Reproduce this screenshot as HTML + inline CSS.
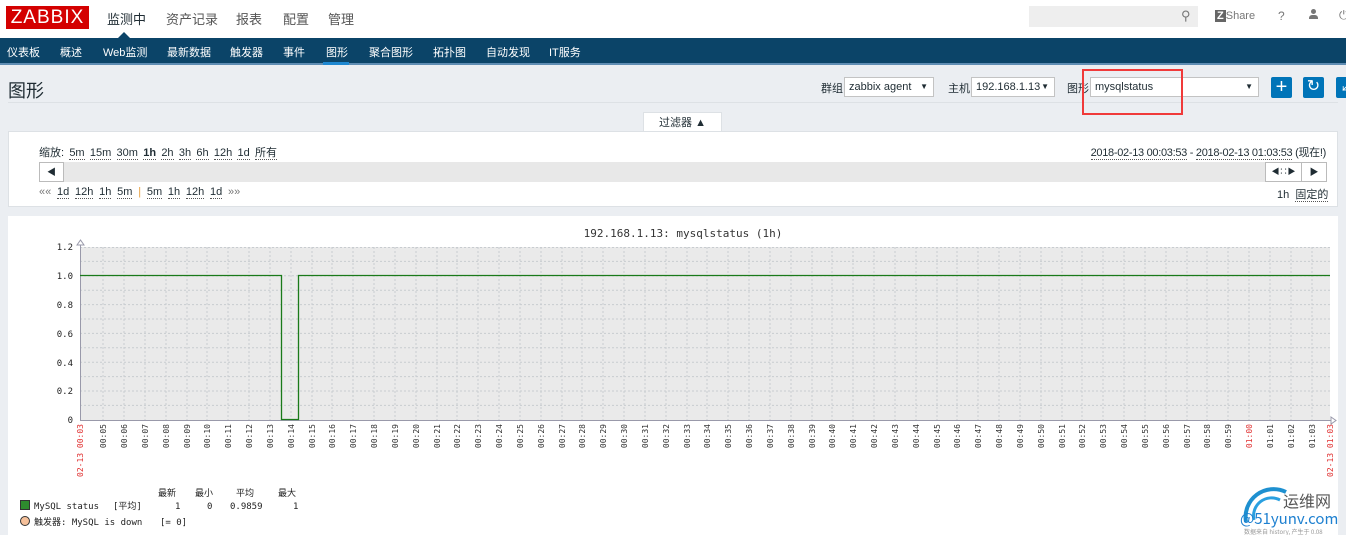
<!DOCTYPE html>
<html><head><meta charset="utf-8"><style>
*{box-sizing:border-box;margin:0;padding:0}
body{width:1346px;height:535px;overflow:hidden;background:#ebeef2;font-family:"Liberation Sans","Noto Sans CJK SC",sans-serif;font-size:12px;color:#1f2c33;position:relative}
.abs{position:absolute}
.top{left:0;top:0;width:1346px;height:38px;background:#fff}
.logo{left:6px;top:6px;width:83px;height:23px;background:#d40000;color:#fff;font-size:19px;line-height:23px;text-align:center;letter-spacing:1px}
.mm{top:9px;font-size:13px;color:#555}
.nav{left:0;top:38px;width:1346px;height:27px;background:#0b4468;border-bottom:2px solid #5f8db3}
.nv{top:44px;color:#fff;font-size:11px}
.sel{height:20px;background:#fff;border:1px solid #c3c3c3;font-size:11px;line-height:18px;padding-left:4px}
.sel:after{content:"▼";position:absolute;right:5px;font-size:8px}
.lbl{font-size:11px;top:80px}
.btn{top:77px;width:21px;height:21px;background:#0074b8;border-radius:2px;color:#fff;text-align:center;font-size:20px;line-height:20px}
.u{border-bottom:1px dotted #555}
</style></head><body>
<div class="abs top"></div>
<div class="abs logo">ZABBIX</div>
<div class="abs mm" style="left:107px;color:#1f2c33">监测中</div>
<div class="abs" style="left:118px;top:32px;width:0;height:0;border-left:6px solid transparent;border-right:6px solid transparent;border-bottom:6px solid #0b4468"></div>
<div class="abs mm" style="left:166px">资产记录</div>
<div class="abs mm" style="left:236px">报表</div>
<div class="abs mm" style="left:283px">配置</div>
<div class="abs mm" style="left:328px">管理</div>
<div class="abs" style="left:1029px;top:6px;width:169px;height:21px;background:#eee"></div>
<div class="abs" style="left:1181px;top:8px;font-size:13px;color:#777">⚲</div>
<div class="abs" style="left:1215px;top:10px;font-size:11px;color:#777"><span style="background:#666;color:#fff;font-weight:bold;padding:0 2px">Z</span>Share</div>
<div class="abs" style="left:1278px;top:9px;font-size:12px;color:#777">?</div>
<div class="abs" style="left:1309px;top:9px;width:9px;height:10px;"><div style="width:5px;height:5px;border-radius:50%;background:#777;margin-left:2px"></div><div style="width:9px;height:4px;background:#777;margin-top:1px;border-radius:3px 3px 0 0"></div></div>
<div class="abs" style="left:1339px;top:8px;font-size:12px;color:#777">⏻</div>
<div class="abs nav"></div>
<div class="abs nv" style="left:7px">仪表板</div>
<div class="abs nv" style="left:60px">概述</div>
<div class="abs nv" style="left:103px">Web监测</div>
<div class="abs nv" style="left:167px">最新数据</div>
<div class="abs nv" style="left:230px">触发器</div>
<div class="abs nv" style="left:283px">事件</div>
<div class="abs nv" style="left:326px">图形</div>
<div class="abs" style="left:323px;top:62px;width:26px;height:3px;background:#1e87d0"></div>
<div class="abs nv" style="left:369px">聚合图形</div>
<div class="abs nv" style="left:433px">拓扑图</div>
<div class="abs nv" style="left:486px">自动发现</div>
<div class="abs nv" style="left:549px">IT服务</div>
<div class="abs" style="left:8px;top:77px;font-size:18px">图形</div>
<div class="abs" style="left:8px;top:102px;width:1330px;height:1px;background:#dde1e5"></div>
<div class="abs lbl" style="left:821px">群组</div>
<div class="abs sel" style="left:844px;top:77px;width:90px">zabbix agent</div>
<div class="abs lbl" style="left:948px">主机</div>
<div class="abs sel" style="left:971px;top:77px;width:84px">192.168.1.13</div>
<div class="abs lbl" style="left:1067px">图形</div>
<div class="abs sel" style="left:1090px;top:77px;width:169px">mysqlstatus</div>
<div class="abs" style="left:1082px;top:69px;width:101px;height:46px;border:2px solid #f03a3a"></div>
<div class="abs btn" style="left:1271px">+</div>
<div class="abs btn" style="left:1303px;font-size:16px">↻</div>
<div class="abs btn" style="left:1336px;font-size:12px">↙</div>
<div class="abs" style="left:643px;top:112px;width:79px;height:20px;background:#fff;border:1px solid #dde1e5;border-bottom:none;text-align:center;font-size:11px;line-height:20px">过滤器 ▲</div>
<div class="abs" style="left:8px;top:131px;width:1330px;height:76px;background:#fff;border:1px solid #dde1e5"></div>
<div class="abs" style="left:39px;top:144px;font-size:11px;word-spacing:2.2px">缩放: <span class="u">5m</span> <span class="u">15m</span> <span class="u">30m</span> <b class="u">1h</b> <span class="u">2h</span> <span class="u">3h</span> <span class="u">6h</span> <span class="u">12h</span> <span class="u">1d</span> <span class="u">所有</span></div>
<div class="abs" style="right:20px;top:144px;font-size:11px;letter-spacing:-0.3px;white-space:nowrap"><span class="u">2018-02-13 00:03:53</span> - <span class="u">2018-02-13 01:03:53</span> (现在!)</div>
<div class="abs" style="left:39px;top:162px;width:1288px;height:20px;background:#e8e8e8"></div>
<div class="abs" style="left:39px;top:162px;width:25px;height:20px;background:#fff;border:1px solid #bbb;font-size:9px;text-align:center;line-height:18px">◀</div>
<div class="abs" style="left:1265px;top:162px;width:37px;height:20px;background:#fff;border:1px solid #bbb;font-size:8px;text-align:center;line-height:18px">◀∷▶</div>
<div class="abs" style="left:1301px;top:162px;width:26px;height:20px;background:#fff;border:1px solid #bbb;font-size:9px;text-align:center;line-height:18px">▶</div>
<div class="abs" style="left:39px;top:186px;font-size:11px;word-spacing:2.7px"><span style="color:#777">««</span> <span class="u">1d</span> <span class="u">12h</span> <span class="u">1h</span> <span class="u">5m</span> <span style="color:#e8a040">|</span> <span class="u">5m</span> <span class="u">1h</span> <span class="u">12h</span> <span class="u">1d</span> <span style="color:#777">»»</span></div>
<div class="abs" style="left:1277px;top:186px;font-size:11px">1h &nbsp;<span class="u">固定的</span></div>
<div class="abs" style="left:8px;top:216px;width:1330px;height:319px;background:#fff"></div>
<svg class="abs" style="left:0;top:0" width="1346" height="535">
<text x="683" y="237" font-family="DejaVu Sans Mono,monospace" font-size="11" text-anchor="middle" fill="#333">192.168.1.13: mysqlstatus (1h)</text>
<rect x="80" y="247" width="1250" height="173" fill="#eaeaea"/>
<g stroke="#c8ccd0" stroke-dasharray="2,2" stroke-width="1">
<path d="M80 261.4H1330M80 275.8H1330M80 290.2H1330M80 304.6H1330M80 319H1330M80 333.4H1330M80 347.8H1330M80 362.2H1330M80 376.6H1330M80 391H1330M80 405.4H1330M80 247.5H1330"/>
<path d="M103 247V420M124 247V420M145 247V420M166 247V420M187 247V420M207 247V420M228 247V420M249 247V420M270 247V420M291 247V420M312 247V420M332 247V420M353 247V420M374 247V420M395 247V420M416 247V420M437 247V420M457 247V420M478 247V420M499 247V420M520 247V420M541 247V420M562 247V420M582 247V420M603 247V420M624 247V420M645 247V420M666 247V420M687 247V420M707 247V420M728 247V420M749 247V420M770 247V420M791 247V420M812 247V420M832 247V420M853 247V420M874 247V420M895 247V420M916 247V420M937 247V420M957 247V420M978 247V420M999 247V420M1020 247V420M1041 247V420M1062 247V420M1082 247V420M1103 247V420M1124 247V420M1145 247V420M1166 247V420M1187 247V420M1207 247V420M1228 247V420M1249 247V420M1270 247V420M1291 247V420M1312 247V420"/>
</g>
<path d="M80.5 243V420.5H1334" stroke="#99a" fill="none"/>
<path d="M77 245l3.5-5 3.5 5z M1331 417l5 3.5-5 3.5z" fill="#fff" stroke="#99a"/>
<path d="M80 275.5H281.5V419.5H298.5V275.5H1330" stroke="#1a7a1a" fill="none" stroke-width="1.3"/>
<g font-family="DejaVu Sans Mono,monospace" font-size="9" fill="#222" text-anchor="end">
<text x="73" y="250">1.2</text><text x="73" y="279">1.0</text><text x="73" y="308">0.8</text><text x="73" y="337">0.6</text><text x="73" y="366">0.4</text><text x="73" y="394">0.2</text><text x="73" y="423">0</text>
</g>
<g font-family="DejaVu Sans Mono,monospace" font-size="8" fill="#333" text-anchor="end">
<text transform="translate(83,424) rotate(-90)" fill="#e03030">02-13 00:03</text>
<text transform="translate(106,424) rotate(-90)">00:05</text><text transform="translate(127,424) rotate(-90)">00:06</text><text transform="translate(148,424) rotate(-90)">00:07</text><text transform="translate(169,424) rotate(-90)">00:08</text><text transform="translate(190,424) rotate(-90)">00:09</text><text transform="translate(210,424) rotate(-90)">00:10</text><text transform="translate(231,424) rotate(-90)">00:11</text><text transform="translate(252,424) rotate(-90)">00:12</text><text transform="translate(273,424) rotate(-90)">00:13</text><text transform="translate(294,424) rotate(-90)">00:14</text><text transform="translate(315,424) rotate(-90)">00:15</text><text transform="translate(335,424) rotate(-90)">00:16</text><text transform="translate(356,424) rotate(-90)">00:17</text><text transform="translate(377,424) rotate(-90)">00:18</text><text transform="translate(398,424) rotate(-90)">00:19</text><text transform="translate(419,424) rotate(-90)">00:20</text><text transform="translate(440,424) rotate(-90)">00:21</text><text transform="translate(460,424) rotate(-90)">00:22</text><text transform="translate(481,424) rotate(-90)">00:23</text><text transform="translate(502,424) rotate(-90)">00:24</text><text transform="translate(523,424) rotate(-90)">00:25</text><text transform="translate(544,424) rotate(-90)">00:26</text><text transform="translate(565,424) rotate(-90)">00:27</text><text transform="translate(585,424) rotate(-90)">00:28</text><text transform="translate(606,424) rotate(-90)">00:29</text><text transform="translate(627,424) rotate(-90)">00:30</text><text transform="translate(648,424) rotate(-90)">00:31</text><text transform="translate(669,424) rotate(-90)">00:32</text><text transform="translate(690,424) rotate(-90)">00:33</text><text transform="translate(710,424) rotate(-90)">00:34</text><text transform="translate(731,424) rotate(-90)">00:35</text><text transform="translate(752,424) rotate(-90)">00:36</text><text transform="translate(773,424) rotate(-90)">00:37</text><text transform="translate(794,424) rotate(-90)">00:38</text><text transform="translate(815,424) rotate(-90)">00:39</text><text transform="translate(835,424) rotate(-90)">00:40</text><text transform="translate(856,424) rotate(-90)">00:41</text><text transform="translate(877,424) rotate(-90)">00:42</text><text transform="translate(898,424) rotate(-90)">00:43</text><text transform="translate(919,424) rotate(-90)">00:44</text><text transform="translate(940,424) rotate(-90)">00:45</text><text transform="translate(960,424) rotate(-90)">00:46</text><text transform="translate(981,424) rotate(-90)">00:47</text><text transform="translate(1002,424) rotate(-90)">00:48</text><text transform="translate(1023,424) rotate(-90)">00:49</text><text transform="translate(1044,424) rotate(-90)">00:50</text><text transform="translate(1065,424) rotate(-90)">00:51</text><text transform="translate(1085,424) rotate(-90)">00:52</text><text transform="translate(1106,424) rotate(-90)">00:53</text><text transform="translate(1127,424) rotate(-90)">00:54</text><text transform="translate(1148,424) rotate(-90)">00:55</text><text transform="translate(1169,424) rotate(-90)">00:56</text><text transform="translate(1190,424) rotate(-90)">00:57</text><text transform="translate(1210,424) rotate(-90)">00:58</text><text transform="translate(1231,424) rotate(-90)">00:59</text>
<text transform="translate(1252,424) rotate(-90)" fill="#e03030">01:00</text>
<text transform="translate(1273,424) rotate(-90)">01:01</text><text transform="translate(1294,424) rotate(-90)">01:02</text><text transform="translate(1315,424) rotate(-90)">01:03</text>
<text transform="translate(1333,424) rotate(-90)" fill="#e03030">02-13 01:03</text>
</g>
<g font-family="DejaVu Sans Mono,'Noto Sans CJK SC',monospace" font-size="9" fill="#222">
<text x="158" y="496">最新</text><text x="195" y="496">最小</text><text x="236" y="496">平均</text><text x="278" y="496">最大</text>
<rect x="20.5" y="500.5" width="9" height="9" fill="#2e8b2e" stroke="#333"/>
<text x="34" y="509">MySQL status</text><text x="113" y="509">[平均]</text>
<text x="175" y="509">1</text><text x="207" y="509">0</text><text x="230" y="509">0.9859</text><text x="293" y="509">1</text>
<circle cx="25" cy="521" r="4.5" fill="#f5c09a" stroke="#333"/>
<text x="34" y="525">触发器: MySQL is down</text><text x="160" y="525">[= 0]</text>
</g>
<g font-family="'Noto Sans CJK SC',sans-serif">
<path d="M1246 522a28 28 0 0 1 40-30" stroke="#1e90d0" stroke-width="4" fill="none"/>
<path d="M1254 520a18 18 0 0 1 26-20" stroke="#2aa0e0" stroke-width="3" fill="none"/>
<text x="1283" y="507" font-size="16" fill="#555">运维网</text>
<text x="1240" y="524" font-size="15" fill="#1e80d0">@51yunv.com</text>
<text x="1244" y="534" font-size="6" fill="#999">数据来自 history, 产生于 0.08</text>
</g>
</svg>
</body></html>
